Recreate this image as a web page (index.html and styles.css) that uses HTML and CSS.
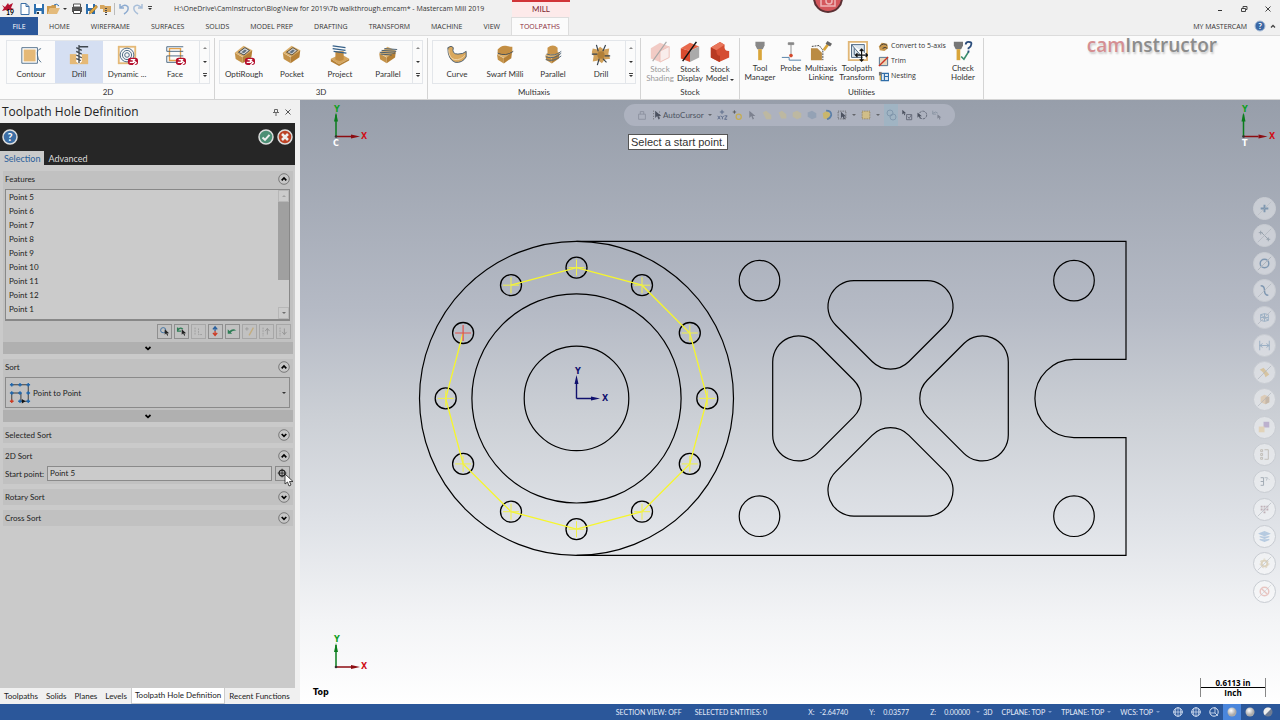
FILE: index.html
```
<!DOCTYPE html>
<html lang="en">
<head>
  <meta charset="UTF-8">
  <title>Mastercam Mill 2019</title>
  <link rel="stylesheet" href="styles.css">
</head>
<body>
  <!-- shared icon shapes -->
  <svg class="defs" aria-hidden="true">
    <symbol id="badge" viewBox="0 0 12 10"><rect x="1" y="1" width="11" height="8" rx="3" fill="#b5122f"/><path d="M3 6h4V4l3 2.500-3 2.500M4 3h5" fill="none" stroke="#fff" stroke-width="1.500"/></symbol>
    <symbol id="block" viewBox="0 0 22 22"><path d="M1 9 11 1l10 5-10 8z" fill="#dcb06c"/><path d="M1 9l9 5v7l-8-5z" fill="#c49248"/><path d="M10 14l11-8-1 8-10 7z" fill="#b58036"/></symbol>
    <symbol id="up" viewBox="0 0 12 12"><circle cx="6" cy="6" r="5.300" fill="#c6c6c6" stroke="#666" stroke-width=".8"/><path d="M3.700 7.300 6 5l2.300 2.300" fill="none" stroke="#000" stroke-width="1.700"/></symbol>
    <symbol id="down" viewBox="0 0 12 12"><circle cx="6" cy="6" r="5.300" fill="#c6c6c6" stroke="#666" stroke-width=".8"/><path d="M3.700 5 6 7.300 8.300 5" fill="none" stroke="#000" stroke-width="1.700"/></symbol>
    <symbol id="chev" viewBox="0 0 12 12"><path d="M3.500 5 6 7.300 8.500 5" fill="none" stroke="#000" stroke-width="1.700"/></symbol>
    <symbol id="cursor" viewBox="0 0 10 14"><path d="M1 0v11l3-3 2 5 2-1-2-4h4z" fill="currentColor"/></symbol>
    <symbol id="pin" viewBox="0 0 40 40"><path d="M4 35V13" stroke="#0a7d1c" stroke-width="1.500"/><path d="M4 11 2 20h4z" fill="#0a7d1c"/><path d="M4 35h15" stroke="#8c0d12" stroke-width="1.500"/><path d="M28 35l-9-2v4z" fill="#8c0d12"/><circle cx="4" cy="35" r="1.300" fill="#333"/></symbol>
    <symbol id="globe" viewBox="0 0 12 12"><circle cx="6" cy="6" r="4.200" fill="none" stroke="#dce6f6"/><path d="M6 1v10M1 6h10M4 2.500Q2.500 6 4 9.500M8 2.500Q9.500 6 8 9.500" fill="none" stroke="#dce6f6" stroke-width=".7"/></symbol>
    <radialGradient id="ball" cx=".4" cy=".35"><stop offset="0" stop-color="#fff"/><stop offset="1" stop-color="#aaa"/></radialGradient>
  </svg>

  <div class="app">
    <header>
      <div class="titlebar">
        <div class="quick">
          <svg class="logo" viewBox="0 0 14 14"><path d="M1 3l3 2 3-4 1 2 4-2-2 5 3 1-4 1H5L1 9l2-3z" fill="#b5122f"/><text x="5" y="13" class="t-year">19</text></svg>
          <button aria-label="New"><svg viewBox="0 0 14 14"><path d="M3 1.500h5l3 3v8H3zM8 1.500v3h3" fill="#fff" stroke="#3c6fa5"/></svg></button>
          <button aria-label="Save"><svg viewBox="0 0 14 14"><path d="M2 2h10v10H2z" fill="#2d6fae"/><path d="M4 2h6v4H4z" fill="#fff"/><path d="M4.500 9h5v3h-5z" fill="#fff"/><path d="M5 10h2v2H5z" fill="#333"/></svg></button>
          <button aria-label="Open"><svg viewBox="0 0 14 14"><path d="M1 4h4l1-1h4v3H4l-2 6H1z" fill="#cf9a4b"/><path d="M4 6h10l-3 6H2z" fill="#e4bb7c"/><path d="M8 3q3-2 5 1" fill="none" stroke="#2d6fae"/></svg></button>
          <span class="caret"></span>
          <button aria-label="Print"><svg viewBox="0 0 14 14"><path d="M3.500 2h7v3h-7z" fill="#fff" stroke="#555"/><path d="M2 5h10v5H2z" fill="#555"/><path d="M3.500 8.500h7v3h-7z" fill="#fff" stroke="#444"/></svg></button>
          <button aria-label="Save as"><svg viewBox="0 0 14 14"><path d="M2 2h9v10H2z" fill="#2d6fae"/><path d="M4 2h5v4H4zM4 9h4v3H4z" fill="#fff"/><path d="M5 12l1-3 6-6 1.500 2L8 11z" fill="#dda640" stroke="#7c5b25" stroke-width=".5"/></svg></button>
          <button aria-label="Zip2Go"><svg viewBox="0 0 14 14"><path d="M2 3h4l1 1h6v6H5V7H2z" fill="#d6a65e"/><path d="M8 6v7" stroke="#4a4a4a" stroke-width="2" stroke-dasharray="1 1"/></svg></button>
          <span class="bar"></span>
          <button aria-label="Undo"><svg viewBox="0 0 14 14"><path d="M3 2v4h4M3 6q5-5 8-1 1 4-4 7" fill="none" stroke="#8dabd0" stroke-width="1.500"/></svg></button>
          <button aria-label="Redo"><svg viewBox="0 0 14 14"><path d="M11 2v4H7M11 6q-5-5-8-1-1 4 4 7" fill="none" stroke="#a9bfd9" stroke-width="1.500"/></svg></button>
          <span class="caret lined"></span>
        </div>
        <div class="filename">H:\OneDrive\CamInstructor\Blog\New for 2019\7b walkthrough.emcam* - Mastercam Mill 2019</div>
        <div class="context">MILL</div>
        <svg class="camera" viewBox="0 0 32 32"><circle cx="16" cy="16" r="14" fill="#d4575c" stroke="#5b3034" stroke-width="2"/><rect x="9" y="10" width="14" height="14" fill="none" stroke="#eeb5b6" stroke-width="1.500"/><circle cx="17" cy="19" r="3" fill="none" stroke="#eeb5b6" stroke-width="1.500"/></svg>
        <div class="window-buttons">
          <button aria-label="Minimize"><svg viewBox="0 0 10 10"><path d="M3 6.500h4" stroke="#333"/></svg></button>
          <button aria-label="Restore"><svg viewBox="0 0 10 10"><path d="M2.500 4.500h4v3h-4zM4 4V2.500h4v3H7" fill="none" stroke="#444"/></svg></button>
          <button aria-label="Close"><svg viewBox="0 0 10 10"><path d="M2.500 2.500l5 5M7.500 2.500l-5 5" stroke="#444"/></svg></button>
        </div>
      </div>

      <nav class="menu">
        <a class="file" href="#file">FILE</a>
        <a href="#home">HOME</a>
        <a href="#wireframe">WIREFRAME</a>
        <a href="#surfaces">SURFACES</a>
        <a href="#solids">SOLIDS</a>
        <a href="#prep">MODEL PREP</a>
        <a href="#drafting">DRAFTING</a>
        <a href="#transform">TRANSFORM</a>
        <a href="#machine">MACHINE</a>
        <a href="#view">VIEW</a>
        <a class="active" href="#toolpaths">TOOLPATHS</a>
        <a class="mine" href="#my">MY MASTERCAM</a>
        <button class="help" aria-label="Help"><svg viewBox="0 0 12 12"><circle cx="6" cy="6" r="5" fill="#3a68a5" stroke="#a9bcd6"/><text x="6" y="9" class="t-help">?</text></svg></button>
        <button class="help" aria-label="Collapse ribbon"><svg viewBox="0 0 12 12"><path d="M4 7.500l2-2 2 2" fill="none" stroke="#444" stroke-width="1.300"/></svg></button>
      </nav>

      <div class="ribbon">
        <section class="group">
          <div class="gallery">
            <button><svg viewBox="0 0 24 24"><path d="M2 4h17v17H2z" fill="#fff" stroke="#4b6a86"/><path d="M4 6h13v13H4z" fill="#e5b977"/><path d="M23 5q-5 1-4 7 0 5 4 8" fill="none" stroke="#4b6a86"/></svg>Contour</button>
            <button class="on"><svg viewBox="0 0 24 24"><path d="M2 11h20v11H2z" fill="#e5b977"/><path d="M9 10h6v9l-3 3-3-3z" fill="#fff"/><path d="M12 1v20M9 4l6 3M9 8l6 3M9 12l6 3M9 16l5 2M12 3h10" fill="none" stroke="#3f474f" stroke-width="1.400"/></svg>Drill</button>
            <button><svg viewBox="0 0 24 24"><path d="M2 2h20v20H2z" fill="#e5b977"/><path d="M4 4h16v16H4z" fill="#f8f8f8"/><g fill="none" stroke="#44627e"><circle cx="12" cy="12" r="7.500"/><circle cx="12" cy="12" r="5"/><circle cx="12" cy="12" r="2.500"/></g><use href="#badge" x="12" y="14" width="12" height="10"/></svg>Dynamic ...</button>
            <button><svg viewBox="0 0 24 24"><path d="M6 5h12v13H6z" fill="none" stroke="#e5a34d" stroke-width="1.500"/><path d="M21 3H3v5h18M21 13H3M3 20h14M3 13v7" fill="none" stroke="#44627e"/><use href="#badge" x="12" y="14" width="12" height="10"/></svg>Face</button>
            <div class="scroll"><span class="caret flip"></span><span class="caret"></span><span class="caret lined"></span></div>
          </div>
          <h2>2D</h2>
        </section>
        <section class="group">
          <div class="gallery">
            <button><svg viewBox="0 0 24 24"><use href="#block" x="1" y="1" width="21" height="21"/><path d="M6 9l7-5 5 3-6 5z" fill="#ddd" stroke="#39434d"/><path d="M9 9l4-3 2 1-3 3z" fill="#62717f"/><use href="#badge" x="12" y="14" width="12" height="10"/></svg>OptiRough</button>
            <button><svg viewBox="0 0 24 24"><use href="#block" x="1" y="1" width="21" height="21"/><path d="M6 9l7-5 5 3-6 5z" fill="#ccc" stroke="#5c4a2d"/><path d="M9 9l4-3 2 1-3 3z" fill="#62717f"/></svg>Pocket</button>
            <button><svg viewBox="0 0 24 24"><path d="M2 16l11-5 9 5-11 6z" fill="#d5a55d"/><path d="M2 16l9 6 11-6v2l-11 6-9-5z" fill="#b58036"/><path d="M7 8h9v9q-4 3-9 0z" fill="#c08b41"/><path d="M4 2l14 2M4 5l14 2M5 8l14 2" stroke="#345f88" stroke-width="1.200"/></svg>Project</button>
            <button><svg viewBox="0 0 24 24"><use href="#block" x="1" y="2" width="21" height="20"/><path d="M3 9l17 1M5 7l16 1M8 5l14 1M4 11l12 1" stroke="#3d566d"/></svg>Parallel</button>
            <div class="scroll"><span class="caret flip"></span><span class="caret"></span><span class="caret lined"></span></div>
          </div>
          <h2>3D</h2>
        </section>
        <section class="group">
          <div class="gallery">
            <button><svg viewBox="0 0 24 24"><path d="M2 4q4-3 6 0-2 7 5 7 6 0 9-3v6q-4 7-12 6-8-3-8-16z" fill="#d9a85e" stroke="#465a6c"/><path d="M3 6q0 9 6 11 7 1 12-5" fill="none" stroke="#f2d9b0"/></svg>Curve</button>
            <button><svg viewBox="0 0 24 24"><use href="#block" x="1" y="4" width="21" height="18"/><path d="M4 6q4-5 9-4 5 1 7 1v6q-8 5-16 1z" fill="#c38e43"/><path d="M4 10q9 4 17-2" fill="none" stroke="#3f4b55"/></svg>Swarf Milli</button>
            <button><svg viewBox="0 0 24 24"><use href="#block" x="1" y="5" width="21" height="17"/><path d="M6 4q6-5 11 0v7H6z" fill="#c99449"/><path d="M5 11q9 3 16-3M4 14q10 3 17-4M4 17q9 3 17-4" fill="none" stroke="#4d6376"/></svg>Parallel</button>
            <button><svg viewBox="0 0 24 24"><path d="M3 5l5 1 3-3 4 3 6-1-1 6 2 5-6 1-3 4-4-3-6 1 1-6-2-4z" fill="#d0a05a"/><circle cx="12" cy="12" r="4" fill="#b17f38"/><path d="M7 1l2 7M17 1l-3 7M2 11h6M22 13h-6M8 23l2-7M18 20l-4-4" stroke="#37424c" stroke-width="1.300"/></svg>Drill</button>
            <div class="scroll"><span class="caret flip"></span><span class="caret"></span><span class="caret lined"></span></div>
          </div>
          <h2>Multiaxis</h2>
        </section>
        <section class="group">
          <div class="tools stock">
            <button disabled><svg viewBox="0 0 24 24"><path d="M2 8 12 2l10 4v12l-10 5-10-4z" fill="#eb9d90"/><path d="M12 11l10-5v12l-10 5z" fill="#f8e0dc" stroke="#e28777"/><path d="M4 22 19 1" stroke="#555" stroke-width="1.200"/></svg>Stock<br>Shading</button>
            <button><svg viewBox="0 0 24 24"><path d="M2 8 12 2l10 4-10 5z" fill="#e8694c"/><path d="M2 8l10 3v12L2 19z" fill="#d94b2e"/><path d="M12 11l10-5v12l-10 5z" fill="#aaa"/><path d="M4 22 19 1" stroke="#111" stroke-width="1.600"/></svg>Stock<br>Display</button>
            <button><svg viewBox="0 0 24 24"><path d="M2 7 12 1l5 3q-1 7 5 7v7l-11 5-9-5z" fill="#d54e32"/><path d="M2 7l10-6 5 3-9 6z" fill="#e9765b"/><path d="M8 10q0 6 4 6v7L2 18V7z" fill="#b83a22"/></svg>Stock<br>Model <span class="caret"></span></button>
          </div>
          <h2>Stock</h2>
        </section>
        <section class="group">
          <div class="tools">
            <button class="mid"><svg viewBox="0 0 24 24"><path d="M7 2h10v4l-2 4H9L7 6z" fill="#888"/><path d="M12 10v12" stroke="#d9a53a" stroke-width="4"/></svg>Tool<br>Manager</button>
            <button><svg viewBox="0 0 24 24"><path d="M9 3h6v2H9zM12 5v11" fill="#888" stroke="#888"/><circle cx="12" cy="17" r="2" fill="#d44a2d"/><path d="M2 19h8v3h13" fill="none" stroke="#4c7ba3"/></svg>Probe</button>
            <button class="mid"><svg viewBox="0 0 24 24"><path d="M1 9h7l5 5v8H1z" fill="#ba8b43"/><path d="M2 7l8-1 4 5v11" fill="none" stroke="#333" stroke-dasharray="2 1"/><path d="M21 3l-6 8" stroke="#d9a53a" stroke-width="3"/><path d="M19 1l5 3-2 3-5-3z" fill="#666"/></svg>Multiaxis<br>Linking</button>
            <button class="wide"><svg viewBox="0 0 24 24"><path d="M3 2h20v20H3z" fill="#fff" stroke="#e1b777" stroke-width="2"/><path d="M6 5v14h12zM9 9v7h6M6 5h14v9" fill="#dce5ed" stroke="#47637e"/><path d="M17 10v13M10.500 16.500h13M15 12l2-2 2 2M15 21l2 2 2-2M12.500 14.500l-2 2 2 2M21.500 14.500l2 2-2 2" fill="none" stroke="#111" stroke-width="1.300"/></svg>Toolpath<br>Transform</button>
            <div class="stack">
              <button><svg viewBox="0 0 12 12"><path d="M1 6l3-4 6 1 1 5-4 3-5-1z" fill="#c8974c"/><path d="M2 6q4-5 8-1M5 8q3-2 5 0" fill="none" stroke="#333"/></svg>Convert to 5-axis</button>
              <button><svg viewBox="0 0 12 12"><path d="M1.500 1.500h9v9h-9z" fill="#e7d6bb" stroke="#496b8d"/><path d="M1 11 11 1" stroke="#cc3424" stroke-width="1.500"/></svg>Trim</button>
              <button><svg viewBox="0 0 12 12"><path d="M3.500 2.500h8v8h-8zM7 3v7M7 6h4" fill="#dfeaf3" stroke="#2f6da8" stroke-width="1.300"/><path d="M1 1h3v4H1z" fill="#777"/><path d="M2.500 5v5" stroke="#d9a53a" stroke-width="1.500"/></svg>Nesting</button>
            </div>
            <button class="mid"><svg viewBox="0 0 24 24"><path d="M2 2h10v4l-2 4H4L2 6z" fill="#777"/><path d="M7 10v12" stroke="#d9a53a" stroke-width="4"/><path d="M10 18l3 3 5-8" fill="none" stroke="#3a8d6c" stroke-width="1.800"/><path d="M15 5q0-3 3-3 4 0 3 3 0 2-3 4v1M18 11.500v2" fill="none" stroke="#2b4d7c" stroke-width="2"/></svg>Check<br>Holder</button>
          </div>
          <h2>Utilities</h2>
        </section>
        <div class="brand"><span>cam</span>Instructor</div>
      </div>
    </header>

    <main>
      <aside>
        <div class="panel-title">
          <h1>Toolpath Hole Definition</h1>
          <button aria-label="Pin"><svg viewBox="0 0 10 10"><path d="M3.500 2.500h3v3h-3zM2 5.500h6M5 6v3" fill="none" stroke="#666"/></svg></button>
          <button aria-label="Close panel"><svg viewBox="0 0 10 10"><path d="M2.500 2.500l5 5M7.500 2.500l-5 5" stroke="#555"/></svg></button>
        </div>
        <div class="panel-head">
          <div class="actions">
            <button aria-label="Panel help"><svg viewBox="0 0 16 16"><circle cx="8" cy="8" r="7" fill="#3c6ea5" stroke="#ddd" stroke-width="1.500"/><text x="8" y="12" class="t-big">?</text></svg></button>
            <button class="ok" aria-label="OK"><svg viewBox="0 0 16 16"><circle cx="8" cy="8" r="7" fill="#4d8f75" stroke="#ddd" stroke-width="1.500"/><path d="M4.500 8.500l2.500 2.300 4.500-5" fill="none" stroke="#eee" stroke-width="2"/></svg></button>
            <button aria-label="Cancel"><svg viewBox="0 0 16 16"><circle cx="8" cy="8" r="7" fill="#bd4427" stroke="#ddd" stroke-width="1.500"/><path d="M5 5l6 6M11 5l-6 6" stroke="#eee" stroke-width="2.500"/></svg></button>
          </div>
          <div class="tabs">
            <button class="active">Selection</button>
            <button>Advanced</button>
          </div>
        </div>

        <div class="panel-body">
          <section class="box">
            <h3>Features <button aria-label="Collapse features"><svg><use href="#up"/></svg></button></h3>
            <div class="list">
              <ul>
                <li>Point 5</li>
                <li>Point 6</li>
                <li>Point 7</li>
                <li>Point 8</li>
                <li>Point 9</li>
                <li>Point 10</li>
                <li>Point 11</li>
                <li>Point 12</li>
                <li>Point 1</li>
              </ul>
              <div class="scrollbar">
                <span class="arrow"><i class="caret flip"></i></span>
                <span class="thumb"></span>
                <span class="arrow"><i class="caret"></i></span>
              </div>
            </div>
            <div class="list-tools">
              <button aria-label="Add features"><svg viewBox="0 0 15 15"><circle cx="6" cy="6" r="3" fill="none" stroke="#34699f"/><use href="#cursor" x="7" y="5" width="6" height="8"/></svg></button>
              <button aria-label="Reselect"><svg viewBox="0 0 15 15"><path d="M3 3v4h4M3 6q3-4 6-1" fill="none" stroke="#2f7d56" stroke-width="1.500"/><use href="#cursor" x="7" y="5" width="6" height="8"/></svg></button>
              <button aria-label="Sort order" disabled><svg viewBox="0 0 15 15"><path d="M3.500 3v9M7.500 4v7h4" fill="none" stroke="#777" stroke-dasharray="2 1"/></svg></button>
              <button aria-label="Reverse"><svg viewBox="0 0 15 15"><path d="M7 2v5M4.500 5 7 2l2.500 3" fill="none" stroke="#285f9e" stroke-width="1.500"/><path d="M7 7v5M4.500 9 7 12l2.500-3" fill="none" stroke="#cc3b24" stroke-width="1.500"/></svg></button>
              <button aria-label="Undo sort"><svg viewBox="0 0 15 15"><path d="M2 5v5h5L5.500 8.500Q8 6 12 6.500 8 3 4 7z" fill="#2f7d56"/></svg></button>
              <button aria-label="Edit point" disabled><svg viewBox="0 0 15 15"><path d="M2.500 4.500h4M4.500 2.500v4" stroke="#777"/><path d="M12 3l-5 9" stroke="#c69b3d" stroke-width="1.500"/></svg></button>
              <button aria-label="Move up" disabled><svg viewBox="0 0 15 15"><path d="M3.500 3v10" stroke="#777" stroke-dasharray="2 1"/><path d="M8.500 11V4M6 7l2.500-3L11 7" fill="none" stroke="#666"/></svg></button>
              <button aria-label="Move down" disabled><svg viewBox="0 0 15 15"><path d="M3.500 3v10" stroke="#777" stroke-dasharray="2 1"/><path d="M8.500 4v7M6 8l2.500 3L11 8" fill="none" stroke="#666"/></svg></button>
            </div>
            <button class="more" aria-label="More feature options"><svg><use href="#chev"/></svg></button>
          </section>

          <section class="box">
            <h3>Sort <button aria-label="Collapse sort"><svg><use href="#up"/></svg></button></h3>
            <div class="combo">
              <svg viewBox="0 0 24 24"><path d="M3 3h18v18h-8V12H3v9" fill="none" stroke="#333"/><path d="M1 3h4M3 1v4M10 3h4M12 1v4M19 3h4M21 1v4M1 12h4M3 10v4M10 12h4M12 10v4M19 12h4M21 10v4M10 21h4M19 21h4M21 19v4M12 19v4" stroke="#1f67ad" stroke-width="1.500"/><path d="M1 21h4M3 19v4" stroke="#cc3b24" stroke-width="1.500"/><path d="M14 18.500v5l4-2.500z" fill="#111"/></svg>
              <select aria-label="Sort method"><option>Point to Point</option></select>
              <span class="caret"></span>
            </div>
            <button class="more" aria-label="More sort options"><svg><use href="#chev"/></svg></button>
          </section>

          <section class="box">
            <h3>Selected Sort <button aria-label="Expand selected sort"><svg><use href="#down"/></svg></button></h3>
          </section>

          <section class="box">
            <h3>2D Sort <button aria-label="Collapse 2D sort"><svg><use href="#up"/></svg></button></h3>
            <div class="start">
              <label for="start">Start point:</label>
              <input id="start" type="text" value="Point 5">
              <button aria-label="Pick start point"><svg viewBox="0 0 15 15"><circle cx="7" cy="7" r="3.500" fill="none" stroke="#222" stroke-width="1.400"/><path d="M7 2v10M2 7h10" stroke="#222"/></svg></button>
              <svg class="mouse" viewBox="0 0 10 14"><path d="M1 1v10l2.500-2 1.500 4 2-1-1.500-3.500H9z" fill="#fff" stroke="#222" stroke-width=".8"/></svg>
            </div>
          </section>

          <section class="box">
            <h3>Rotary Sort <button aria-label="Expand rotary sort"><svg><use href="#down"/></svg></button></h3>
          </section>

          <section class="box">
            <h3>Cross Sort <button aria-label="Expand cross sort"><svg><use href="#down"/></svg></button></h3>
          </section>
        </div>

        <nav class="dock">
          <button>Toolpaths</button>
          <button>Solids</button>
          <button>Planes</button>
          <button>Levels</button>
          <button class="active">Toolpath Hole Definition</button>
          <button>Recent Functions</button>
        </nav>
      </aside>

      <div class="viewport">
        <svg class="drawing" viewBox="300 100 980 604" preserveAspectRatio="xMinYMin meet">
          <g transform="translate(0 .4)">
            <!-- part outline -->
            <g fill="none" stroke="#000" stroke-width="1.200">
              <path d="M576.500 241H1126V359H1074A39.100 39.100 0 0 0 1074 437.200H1126V555H576.500"/>
              <circle cx="576.500" cy="398" r="157"/>
              <circle cx="576.500" cy="398" r="104.600"/>
              <circle cx="576.500" cy="398" r="52.300"/>
              <circle cx="759.500" cy="280.200" r="20.300"/>
              <circle cx="1074" cy="280.200" r="20.300"/>
              <circle cx="759.500" cy="515.800" r="20.300"/>
              <circle cx="1074" cy="515.800" r="20.300"/>
              <path id="pocket" d="M854 280.200H927A26 26 0 0 1 945.400 324.600L908.900 361.100A26 26 0 0 1 872.100 361.100L835.600 324.600A26 26 0 0 1 854 280.200Z"/>
              <use href="#pocket" transform="rotate(90 890.500 398)"/>
              <use href="#pocket" transform="rotate(180 890.500 398)"/>
              <use href="#pocket" transform="rotate(270 890.500 398)"/>
            </g>
            <!-- bolt circle -->
            <g fill="none" stroke="#000" stroke-width="1.300">
              <circle cx="576.500" cy="267.200" r="10.500"/><circle cx="642" cy="284.800" r="10.500"/>
              <circle cx="689.800" cy="332.600" r="10.500"/><circle cx="707.300" cy="398" r="10.500"/>
              <circle cx="689.800" cy="463.500" r="10.500"/><circle cx="642" cy="511.300" r="10.500"/>
              <circle cx="576.500" cy="528.800" r="10.500"/><circle cx="511" cy="511.300" r="10.500"/>
              <circle cx="463.100" cy="463.500" r="10.500"/><circle cx="445.700" cy="398" r="10.500"/>
              <circle cx="463.100" cy="332.600" r="10.500"/><circle cx="511" cy="284.800" r="10.500"/>
            </g>
            <!-- drill path -->
            <path d="M463.100 332.600 445.700 398 463.100 463.500 511 511.300 576.500 528.800 642 511.300 689.800 463.500 707.300 398 689.800 332.600 642 284.800 576.500 267.200 511 284.800" fill="none" stroke="#f6f62c" stroke-width="1.300"/>
            <path d="M568.500 267.200h16m-8-8v16M634 284.800h16m-8-8v16M681.800 332.600h16m-8-8v16M699.300 398h16m-8-8v16M681.800 463.500h16m-8-8v16M634 511.300h16m-8-8v16M568.500 528.800h16m-8-8v16M503 511.300h16m-8-8v16M455.100 463.500h16m-8-8v16M437.700 398h16m-8-8v16M503 284.800h16m-8-8v16" stroke="#f0f04a" fill="none"/>
            <path d="M455.100 332.600h16m-8-8v16" stroke="#e0504c" stroke-width="1.200" fill="none"/>
          </g>
          <!-- origin -->
          <path d="M576.500 398.500V383M576.500 398.500H591" stroke="#10106e" stroke-width="1.400"/>
          <path d="M576.500 375l-2 9h4zM600 398.500l-9-2v4z" fill="#10106e"/>
          <text x="575" y="374" class="axis origin">Y</text>
          <text x="602" y="401" class="axis origin">X</text>
          <!-- corner gnomons -->
          <use href="#pin" x="332" y="101.500" width="40" height="40"/>
          <text x="334" y="112" class="axis green">Y</text><text x="361" y="139" class="axis red">X</text><text x="333" y="146" class="axis white">C</text>
          <use href="#pin" x="1239.500" y="101.500" width="40" height="40"/>
          <text x="1242" y="112" class="axis green">Y</text><text x="1269" y="139" class="axis red">X</text><text x="1242" y="146" class="axis white">T</text>
          <use href="#pin" x="332" y="632" width="40" height="40"/>
          <text x="334" y="642" class="axis green">Y</text><text x="361" y="669" class="axis red">X</text>
        </svg>

        <div class="select-bar">
          <svg class="dim" viewBox="0 0 14 14"><path d="M3 6h8v6H3zM5 6V3h4v3" fill="none" stroke="#6a7080"/></svg>
          <button class="auto"><svg viewBox="0 0 14 14"><path d="M3 2v11M10 3v9" stroke="#555" stroke-dasharray="1 2"/><use href="#cursor" x="4" y="2" width="8" height="11"/></svg>AutoCursor</button>
          <span class="caret"></span>
          <svg viewBox="0 0 14 14"><path d="M7 1v5M4.500 3.500h5M2 8l3 4M5 8l-3 4M6 8l1.500 2L9 8M7.500 10v2M10 8h3l-3 4h3" fill="none" stroke="#556585"/></svg>
          <svg viewBox="0 0 14 14"><path d="M2 3.500h4M4 1.500v4" stroke="#555"/><circle cx="9" cy="9" r="3" fill="none" stroke="#c5ad55" stroke-width="1.500"/></svg>
          <svg class="dim" viewBox="0 0 14 14"><use href="#cursor" x="3" y="2" width="8" height="11"/></svg>
          <svg class="dim" viewBox="0 0 14 14"><path d="M2 4l4-2 6 5v5H6z" fill="#cdbf85"/></svg>
          <svg class="dim" viewBox="0 0 14 14"><path d="M3 4l4-2 5 4v5H6z" fill="#cdbf85"/></svg>
          <svg class="dim" viewBox="0 0 14 14"><path d="M2 4l5-2 5 3v5l-5 2-5-3z" fill="#cdbf85"/></svg>
          <svg class="dim" viewBox="0 0 14 14"><path d="M2 4l5-2 5 3v5l-5 2-5-3z" fill="#7d93ad"/></svg>
          <svg viewBox="0 0 14 14"><path d="M2 5l5-3 4 4-2 6-6-1z" fill="#c9b66c"/><path d="M6 2q6 0 6 5-1 4-5 5" fill="none" stroke="#5b7fa8" stroke-width="2"/></svg>
          <svg viewBox="0 0 14 14"><path d="M2.500 2.500h9v9h-9z" fill="none" stroke="#555" stroke-dasharray="1 1"/><use href="#cursor" x="5" y="3" width="7" height="10"/></svg>
          <span class="caret"></span>
          <svg viewBox="0 0 14 14"><path d="M2.500 2.500h9v9h-9z" fill="#d1be88" stroke="#8b7750" stroke-dasharray="1 1"/></svg>
          <span class="caret"></span>
          <svg class="picked" viewBox="0 0 14 14"><circle cx="6" cy="5" r="3" fill="none" stroke="#8298ad"/><circle cx="9" cy="9" r="3" fill="none" stroke="#8298ad"/></svg>
          <svg viewBox="0 0 14 14"><use href="#cursor" x="1" y="1" width="5" height="7"/><path d="M6.500 6.500h6v6h-6zM8 9l1.500 2L12 7" fill="none" stroke="#5d6473"/></svg>
          <svg viewBox="0 0 14 14"><circle cx="8" cy="7" r="4.500" fill="none" stroke="#5d6473" stroke-dasharray="3 1"/><use href="#cursor" x="1" y="4" width="6" height="8"/></svg>
          <svg class="dim" viewBox="0 0 14 14"><path d="M2 2v4h4M2 5q4-3 6 0" fill="none" stroke="#678"/><use href="#cursor" x="7" y="6" width="5" height="7"/></svg>
        </div>

        <div class="prompt">Select a start point.</div>

        <div class="masks">
          <button aria-label="Select points"><svg viewBox="0 0 22 22"><path d="M11 7v8M7 11h8" stroke="#6d8aa8" stroke-width="2"/><path d="M4 18 18 4" stroke="#a7adb5" stroke-width=".5"/></svg></button>
          <button aria-label="Select lines"><svg viewBox="0 0 22 22"><path d="M7 7l8 8M5 8h4M7 6v4M13 15h4M15 13v4" stroke="#8c98a4"/><path d="M4 18 18 4" stroke="#a7adb5" stroke-width=".7"/></svg></button>
          <button aria-label="Select arcs"><svg viewBox="0 0 22 22"><circle cx="11" cy="11" r="4.500" fill="none" stroke="#6d8aa8" stroke-width="1.500"/><path d="M4 18 18 4" stroke="#a7adb5"/></svg></button>
          <button aria-label="Select splines"><svg viewBox="0 0 22 22"><path d="M7 6q4 0 4 5t4 5" fill="none" stroke="#6d8aa8" stroke-width="1.500"/><path d="M4 18 18 4" stroke="#a7adb5" stroke-width=".7"/></svg></button>
          <button aria-label="Select wireframe"><svg viewBox="0 0 22 22"><path d="M7 8q4-2 8 0v6q-4 2-8 0zM7 11h8M11 7v8M7 8l8 6" fill="none" stroke="#8ca5bd"/><path d="M4 18 18 4" stroke="#a7adb5" stroke-width=".7"/></svg></button>
          <button aria-label="Select dimensions"><svg viewBox="0 0 22 22"><path d="M6 6v10M16 6v10M6 11h10M9 9l-3 2 3 2M13 9l3 2-3 2" fill="none" stroke="#8ca5bd"/></svg></button>
          <button aria-label="Select surfaces"><svg viewBox="0 0 22 22"><path d="M6 8l4-2 6 7-4 3q-1-5-6-8z" fill="#d6be92"/><path d="M4 18 18 4" stroke="#a7adb5" stroke-width=".7"/></svg></button>
          <button aria-label="Select solids"><svg viewBox="0 0 22 22"><path d="M7 8l4-2 5 2v6l-4 2-5-2z" fill="#dcc6ac"/><path d="M12 9l4-1v6l-4 2z" fill="#bfae9b"/><path d="M4 18 18 4" stroke="#a7adb5" stroke-width=".7"/></svg></button>
          <button aria-label="Select by colour"><svg viewBox="0 0 22 22"><path d="M10 5h6v6h-6z" fill="#b4a5c8"/><path d="M5 10h6v6H5z" fill="#e2cfae"/></svg></button>
          <button aria-label="Select group"><svg viewBox="0 0 22 22"><path d="M7 6h2v2H7zM7 10h2v2H7zM7 14h2v2H7zM11 6h4v10h-4" fill="none" stroke="#b9b3ab"/></svg></button>
          <button aria-label="Select result"><svg viewBox="0 0 22 22"><path d="M7 7h3v8H7M7 11h3" fill="none" stroke="#909aa6"/><path d="M11 7h3l-1 3M15 8l1 1" fill="none" stroke="#aab3bd"/></svg></button>
          <button aria-label="Select named"><svg viewBox="0 0 22 22"><path d="M7 8h8M7 11h8M10 14h3" stroke="#b5a2aa" stroke-width="2" stroke-dasharray="2 1"/><path d="M4 18 18 4" stroke="#a7adb5" stroke-width=".7"/></svg></button>
          <button aria-label="Select level"><svg viewBox="0 0 22 22"><path d="M6 8l5-2 5 2-5 2zM6 11l5 2 5-2M6 14l5 2 5-2" fill="#a9c2dc" stroke="#a9c2dc" stroke-width="1.300"/></svg></button>
          <button aria-label="Select other"><svg viewBox="0 0 22 22"><circle cx="11" cy="11" r="3" fill="none" stroke="#d8cbb0" stroke-width="2"/><circle cx="11" cy="11" r="4.600" fill="none" stroke="#d8cbb0" stroke-dasharray="2 2"/><path d="M4 18 18 4" stroke="#b5bac0" stroke-width=".7"/></svg></button>
          <button aria-label="Clear masks"><svg viewBox="0 0 22 22"><circle cx="11" cy="11" r="4.500" fill="none" stroke="#e6bbb6" stroke-width="1.500"/><path d="M8 8l6 6" stroke="#e6bbb6" stroke-width="1.500"/><path d="M4 18 18 4" stroke="#b5bac0" stroke-width=".5"/></svg></button>
        </div>

        <div class="view-name">Top</div>
        <div class="scale"><span>0.6113 in</span><span>Inch</span></div>
      </div>
    </main>

    <footer>
      <span class="section-view">SECTION VIEW: OFF</span>
      <span class="entities">SELECTED ENTITIES: 0</span>
      <span class="coord"><b>X:</b> -2.64740</span>
      <span class="coord"><b>Y:</b> 0.03577</span>
      <span class="coord last"><b>Z:</b> 0.00000</span>
      <span class="plane"><i class="caret"></i>3D</span>
      <span class="plane">CPLANE: TOP <i class="caret"></i></span>
      <span class="plane">TPLANE: TOP <i class="caret"></i></span>
      <span class="plane">WCS: TOP <i class="caret"></i></span>
      <div class="shade">
        <button aria-label="Wireframe"><svg><use href="#globe"/></svg></button>
        <button aria-label="Dimmed"><svg><use href="#globe"/></svg></button>
        <button aria-label="No hidden"><svg viewBox="0 0 12 12"><circle cx="6" cy="6" r="4.200" fill="none" stroke="#dce6f6"/><path d="M7 1v6H2M7 7l3 3" fill="none" stroke="#dce6f6" stroke-width=".8"/></svg></button>
        <button class="on" aria-label="Shaded"><svg viewBox="0 0 12 12"><circle cx="6" cy="6" r="4.500" fill="url(#ball)"/></svg></button>
        <button aria-label="Outline shaded"><svg viewBox="0 0 12 12"><circle cx="6" cy="6" r="4.500" fill="url(#ball)"/></svg></button>
        <button aria-label="Translucent"><svg viewBox="0 0 12 12"><circle cx="6" cy="6" r="4.500" fill="#6d7b92"/><path d="M2.800 9.200A4.500 4.500 0 0 1 9.200 2.800z" fill="#eee"/></svg></button>
      </div>
    </footer>
  </div>
</body>
</html>
```
FILE: styles.css
```
* {
  margin: 0;
  padding: 0;
  box-sizing: border-box;
}
body {
  font-family: Lato, "Open Sans", sans-serif;
  font-size: 8px;
  line-height: 12px;
  color: #333;
  background: #f0f0f0;
}
button, input, select {
  font: inherit;
  color: inherit;
  border: 0;
  background: none;
}
a {
  color: inherit;
  text-decoration: none;
}
h1, h2, h3 {
  font-size: inherit;
  font-weight: normal;
}
ul {
  list-style: none;
}
svg {
  display: block;
  flex: none;
}
.defs {
  position: absolute;
  width: 0;
  height: 0;
}
.app {
  display: flex;
  flex-direction: column;
  height: 100vh;
}
.caret {
  display: inline-block;
  border: 2px solid transparent;
  border-top-color: #333;
  border-bottom: 0;
}
.caret.flip {
  border-top: 0;
  border-bottom: 2px solid #888;
}
.caret.lined {
  position: relative;
}
.caret.lined::before {
  content: "";
  position: absolute;
  left: -2px;
  top: -4px;
  width: 4px;
  height: 1px;
  background: #444;
}

/* title bar */
.titlebar {
  position: relative;
  display: flex;
  height: 17px;
}
.quick {
  display: flex;
  align-items: center;
  width: 174px;
}
.quick svg {
  width: 14px;
  height: 14px;
}
.quick .logo {
  margin: 0 3px 0 1px;
}
.t-year {
  font: bold 7px Lato, sans-serif;
}
.quick .bar {
  width: 1px;
  height: 12px;
  margin: 0 2px;
  background: #bbb;
}
.quick .caret {
  margin: 0 3px;
}
.filename {
  width: 338px;
  font: 7px/17px "Open Sans", sans-serif;
  white-space: nowrap;
}
.context {
  width: 58px;
  border-top: 2px solid #d13438;
  background: #fdeaea;
  color: #7a2830;
  text-align: center;
  line-height: 14px;
}
.camera {
  position: absolute;
  left: 812px;
  top: -18px;
  width: 32px;
  height: 32px;
}
.window-buttons {
  display: flex;
  align-items: center;
  gap: 14px;
  margin-left: auto;
  padding-right: 7px;
}
.window-buttons svg {
  width: 10px;
  height: 10px;
}

/* ribbon tabs */
.menu {
  display: flex;
  height: 18px;
  font: 7px/19px "Open Sans", sans-serif;
}
.menu a {
  margin-right: 1px;
  padding: 0 10px;
}
.menu .file {
  width: 38px;
  padding: 0;
  text-align: center;
  background: #2b579a;
  color: #fff;
}
.menu .active {
  width: 58px;
  padding: 0;
  text-align: center;
  border: 1px solid #ddd;
  border-bottom: 0;
  background: #fbfbfb;
  color: #8a2a3a;
  line-height: 17px;
}
.menu .mine {
  margin-left: auto;
  padding: 0 6px;
}
.help svg {
  width: 12px;
  height: 12px;
  margin-right: 1px;
}
.t-help {
  font: bold 8px Lato, sans-serif;
  fill: #fff;
  text-anchor: middle;
}

/* ribbon */
.ribbon {
  display: flex;
  height: 65px;
  padding-top: 2px;
  border-top: 1px solid #dcdcdc;
  border-bottom: 1px solid #d4d4d4;
  background: #fbfbfb;
}
.group {
  display: flex;
  flex-direction: column;
  padding: 2px 4px 0;
  border-right: 1px solid #d4d4d4;
}
.group:first-child {
  padding-left: 6px;
}
.group h2 {
  margin-top: auto;
  padding-bottom: 1px;
  text-align: center;
}
.gallery {
  display: flex;
  height: 44px;
  border: 1px solid #e3e6ea;
}
.gallery button {
  width: 48px;
}
.gallery .on {
  background: #d5dff2;
}
.gallery button svg, .tools > button svg {
  width: 22px;
  height: 22px;
  margin: 0 auto 2px;
}
.scroll {
  display: flex;
  flex-direction: column;
  width: 10px;
  border-left: 1px solid #e3e6ea;
}
.scroll .caret {
  margin: auto;
}
.tools {
  display: flex;
  height: 44px;
}
.tools > button {
  display: flex;
  flex-direction: column;
  align-items: center;
  width: 29px;
  line-height: 9px;
  white-space: nowrap;
}
.tools.stock > button {
  display: block;
  width: 30px;
}
.tools .mid {
  width: 32px;
}
.tools .wide {
  width: 40px;
}
button:disabled {
  opacity: 0.5;
}
.stack {
  display: flex;
  flex-direction: column;
  gap: 3px;
  padding: 0 1px;
  font: 7px/12px "Open Sans", sans-serif;
}
.stack button {
  display: flex;
  align-items: center;
  gap: 2px;
  white-space: nowrap;
}
.stack svg {
  width: 11px;
  height: 11px;
}
.brand {
  margin: -4px 63px 0 auto;
  font: 600 19px/22px "Open Sans", sans-serif;
  color: #8c8c8c;
  text-shadow: 1px 2px 2px #ccc;
}
.brand span {
  color: #d58f92;
}

/* left panel */
main {
  display: flex;
  flex: 1;
  min-height: 0;
}
aside {
  display: flex;
  flex-direction: column;
  width: 300px;
  padding-right: 5px;
  color: #222;
}
.panel-title {
  display: flex;
  align-items: center;
  height: 23px;
  padding-right: 1px;
}
.panel-title h1 {
  flex: 1;
  padding-left: 2px;
  font: 12px/20px "Open Sans", sans-serif;
}
.panel-title svg {
  width: 10px;
  height: 10px;
  margin: 0 1px;
}
.panel-head {
  background: #262626;
  color: #ddd;
}
.actions {
  display: flex;
  align-items: center;
  gap: 3px;
  height: 28px;
  padding: 0 2px;
}
.actions svg {
  width: 16px;
  height: 16px;
}
.actions .ok {
  margin-left: auto;
}
.t-big {
  font: bold 11px Lato, sans-serif;
  fill: #fff;
  text-anchor: middle;
}
.tabs {
  display: flex;
  font-size: 9px;
}
.tabs button {
  height: 14px;
  padding: 0 4px;
  line-height: 16px;
}
.tabs .active {
  background: #cacaca;
  color: #2b5f9a;
}
.panel-body {
  flex: 1;
  display: flex;
  flex-direction: column;
  gap: 5px;
  padding: 6px 2px 0 3px;
  background: #cacaca;
}
.box {
  background: #c1c1c1;
}
.box h3 {
  display: flex;
  align-items: center;
  justify-content: space-between;
  height: 16px;
  padding: 0 3px 0 2px;
}
.box h3 svg, .more svg {
  width: 12px;
  height: 12px;
}
.list {
  display: flex;
  height: 132px;
  margin: 2px 3px 0 2px;
  border: 1px solid #888;
  border-bottom-width: 2px;
  background: #cbcbcb;
}
.list ul {
  flex: 1;
}
.list li {
  padding-left: 3px;
  line-height: 14px;
}
.scrollbar {
  display: flex;
  flex-direction: column;
  width: 11px;
}
.arrow {
  display: flex;
  align-items: center;
  justify-content: center;
  height: 12px;
  border: 1px solid #aaa;
  opacity: 0.6;
}
.arrow:last-child {
  margin-top: auto;
}
.thumb {
  height: 78px;
  background: #a0a0a0;
}
.list-tools {
  display: flex;
  justify-content: flex-end;
  gap: 2px;
  padding: 3px 2px;
}
.list-tools button {
  width: 15px;
  height: 15px;
  border: 1px solid #8f8f8f;
}
.more {
  display: flex;
  justify-content: center;
  width: 100%;
  height: 12px;
  background: #b0b0b0;
}
.combo {
  display: flex;
  align-items: center;
  height: 31px;
  margin: 2px 3px 2px 2px;
  padding: 0 3px;
  border: 1px solid #8a8a8a;
}
.combo svg {
  width: 22px;
  height: 22px;
}
.combo select {
  flex: 1;
  padding-left: 2px;
  appearance: none;
}
.start {
  position: relative;
  display: flex;
  align-items: center;
  gap: 3px;
  padding: 2px 3px 3px 2px;
}
.start input {
  flex: 1;
  height: 15px;
  padding: 0 2px 2px;
  border: 1px solid #8a8a8a;
  background: #cbcbcb;
}
.start button {
  width: 15px;
  height: 15px;
  border: 1px solid #8a8a8a;
}
.mouse {
  position: absolute;
  right: -1px;
  top: 9px;
  width: 10px;
  height: 14px;
}
.dock {
  display: flex;
  height: 16px;
  white-space: nowrap;
}
.dock button {
  padding: 0 4px 1px;
}
.dock .active {
  padding: 0 3px 1px;
  border: 1px solid #ccc;
  border-top: 0;
  background: #fff;
}

/* graphics window */
.viewport {
  position: relative;
  flex: 1;
  min-width: 0;
  background: linear-gradient(#979eaa, #b5bac5 35%, #cbcfd5 52%, #dfe2e7 70%, #f3f4f6 86%, #fff);
}
.drawing {
  width: 100%;
  height: 100%;
}
.axis {
  font: bold 8px "DejaVu Sans", sans-serif;
}
.origin {
  fill: #10106e;
}
.green {
  fill: #0fa01f;
}
.red {
  fill: #d01018;
}
.white {
  fill: #fff;
}
.select-bar {
  position: absolute;
  left: 324px;
  top: 4px;
  display: flex;
  align-items: center;
  gap: 3px;
  width: 331px;
  height: 22px;
  padding: 0 12px;
  border-radius: 11px;
  background: #adb2bf;
  color: #4c5260;
}
.select-bar svg {
  width: 12px;
  height: 12px;
}
.select-bar .caret {
  margin: 0 1px;
  opacity: 0.6;
}
.select-bar .auto {
  display: flex;
  align-items: center;
}
.select-bar .dim {
  opacity: 0.5;
}
.select-bar .picked {
  width: 14px;
  height: 22px;
  background: #a0b4c3;
}
.prompt {
  position: absolute;
  left: 328px;
  top: 34px;
  padding: 0 2px;
  border: 1px solid #555;
  background: #fff;
  font: 11px/14px "Liberation Sans", sans-serif;
}
.masks {
  position: absolute;
  right: 4px;
  top: 97px;
  display: flex;
  flex-direction: column;
  justify-content: space-between;
  height: 406px;
}
.masks button {
  width: 23px;
  height: 23px;
  border: 1px solid #c8ccd2;
  border-radius: 50%;
  background: rgba(255, 255, 255, 0.4);
}
.masks svg {
  opacity: 0.8;
}
.view-name {
  position: absolute;
  left: 13px;
  bottom: 5px;
  font: bold 8px/12px "DejaVu Sans", sans-serif;
  color: #000;
}
.scale {
  position: absolute;
  right: 14px;
  bottom: 7px;
  display: flex;
  flex-direction: column;
  width: 66px;
  border: 1px solid #888;
  border-width: 0 1px;
  text-align: center;
  font: bold 8px/9px "Open Sans", sans-serif;
  color: #000;
}
.scale span:first-child {
  border-bottom: 1px solid #000;
}

/* status bar */
footer {
  display: flex;
  justify-content: flex-end;
  align-items: center;
  gap: 9px;
  height: 16px;
  padding-right: 3px;
  background: #2b579a;
  color: #e8eefa;
  font-size: 7px;
}
.section-view {
  margin-right: 4px;
}
.entities {
  margin-right: 32px;
}
.coord {
  display: flex;
  justify-content: space-between;
  width: 40px;
  margin-right: 12px;
}
.coord.last {
  margin-right: -3px;
}
.coord b {
  font-weight: normal;
}
.plane {
  display: flex;
  align-items: center;
  gap: 3px;
}
.plane .caret {
  border-top-color: #7f9bc9;
}
.shade {
  display: flex;
}
.shade button {
  width: 18px;
  height: 16px;
}
.shade svg {
  width: 12px;
  height: 12px;
  margin: auto;
}
.shade .on {
  background: #4a86dc;
}
```
